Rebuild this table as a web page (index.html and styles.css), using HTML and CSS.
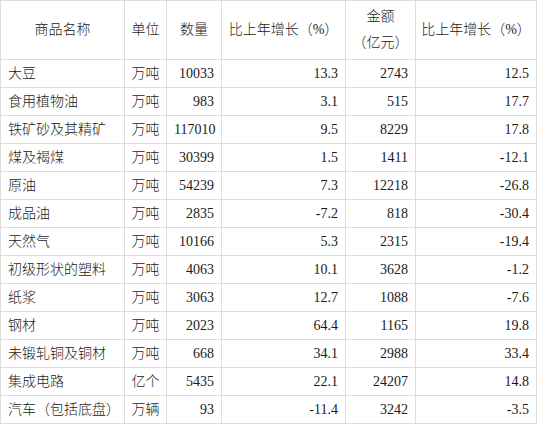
FILE: index.html
```html
<!DOCTYPE html>
<html lang="zh-CN">
<head>
<meta charset="utf-8">
<title>主要商品进口数量、金额及其增长速度</title>
<link rel="stylesheet" href="styles.css">
</head>
<body>
<table class="data">
  <colgroup>
    <col class="c-name">
    <col class="c-unit">
    <col class="c-qty">
    <col class="c-g1">
    <col class="c-amt">
    <col class="c-g2">
  </colgroup>
  <thead>
    <tr>
      <th>商品名称</th>
      <th>单位</th>
      <th>数量</th>
      <th>比上年增长（%）</th>
      <th>金额<br>（亿元）</th>
      <th>比上年增长（%）</th>
    </tr>
  </thead>
  <tbody>
    <tr><td class="name">大豆</td><td class="unit">万吨</td><td class="num">10033</td><td class="num">13.3</td><td class="num">2743</td><td class="num">12.5</td></tr>
    <tr><td class="name">食用植物油</td><td class="unit">万吨</td><td class="num">983</td><td class="num">3.1</td><td class="num">515</td><td class="num">17.7</td></tr>
    <tr><td class="name">铁矿砂及其精矿</td><td class="unit">万吨</td><td class="num">117010</td><td class="num">9.5</td><td class="num">8229</td><td class="num">17.8</td></tr>
    <tr><td class="name">煤及褐煤</td><td class="unit">万吨</td><td class="num">30399</td><td class="num">1.5</td><td class="num">1411</td><td class="num">-12.1</td></tr>
    <tr><td class="name">原油</td><td class="unit">万吨</td><td class="num">54239</td><td class="num">7.3</td><td class="num">12218</td><td class="num">-26.8</td></tr>
    <tr><td class="name">成品油</td><td class="unit">万吨</td><td class="num">2835</td><td class="num">-7.2</td><td class="num">818</td><td class="num">-30.4</td></tr>
    <tr><td class="name">天然气</td><td class="unit">万吨</td><td class="num">10166</td><td class="num">5.3</td><td class="num">2315</td><td class="num">-19.4</td></tr>
    <tr><td class="name">初级形状的塑料</td><td class="unit">万吨</td><td class="num">4063</td><td class="num">10.1</td><td class="num">3628</td><td class="num">-1.2</td></tr>
    <tr><td class="name">纸浆</td><td class="unit">万吨</td><td class="num">3063</td><td class="num">12.7</td><td class="num">1088</td><td class="num">-7.6</td></tr>
    <tr><td class="name">钢材</td><td class="unit">万吨</td><td class="num">2023</td><td class="num">64.4</td><td class="num">1165</td><td class="num">19.8</td></tr>
    <tr><td class="name">未锻轧铜及铜材</td><td class="unit">万吨</td><td class="num">668</td><td class="num">34.1</td><td class="num">2988</td><td class="num">33.4</td></tr>
    <tr><td class="name">集成电路</td><td class="unit">亿个</td><td class="num">5435</td><td class="num">22.1</td><td class="num">24207</td><td class="num">14.8</td></tr>
    <tr><td class="name">汽车（包括底盘）</td><td class="unit">万辆</td><td class="num">93</td><td class="num">-11.4</td><td class="num">3242</td><td class="num">-3.5</td></tr>
  </tbody>
</table>
</body>
</html>
```

FILE: styles.css
```css
html, body {
  margin: 0;
  padding: 0;
  background: #ffffff;
}

body {
  font-family: "Liberation Serif", "Noto Sans CJK SC", serif;
  font-size: 14px;
  font-weight: 300;
  color: #1a1a1a;
}

.data {
  border-collapse: collapse;
  table-layout: fixed;
  width: 536px;
}

.c-name { width: 124px; }
.c-unit { width: 42px; }
.c-qty  { width: 55px; }
.c-g1   { width: 124px; }
.c-amt  { width: 70px; }
.c-g2   { width: 121px; }

.data th,
.data td {
  border: 1px solid #dcdcdc;
  white-space: nowrap;
  overflow: hidden;
}

.data th {
  font-weight: 300;
  text-align: center;
  height: 59px;
  box-sizing: border-box;
  padding: 3px 2px;
  line-height: 26px;
}

.data td {
  height: 28px;
  box-sizing: border-box;
  padding: 0 7px;
  line-height: 26px;
}

.data td.name { text-align: left; }
.data td.unit { text-align: center; padding: 0 2px; }
.data td.num { text-align: right; }
```
